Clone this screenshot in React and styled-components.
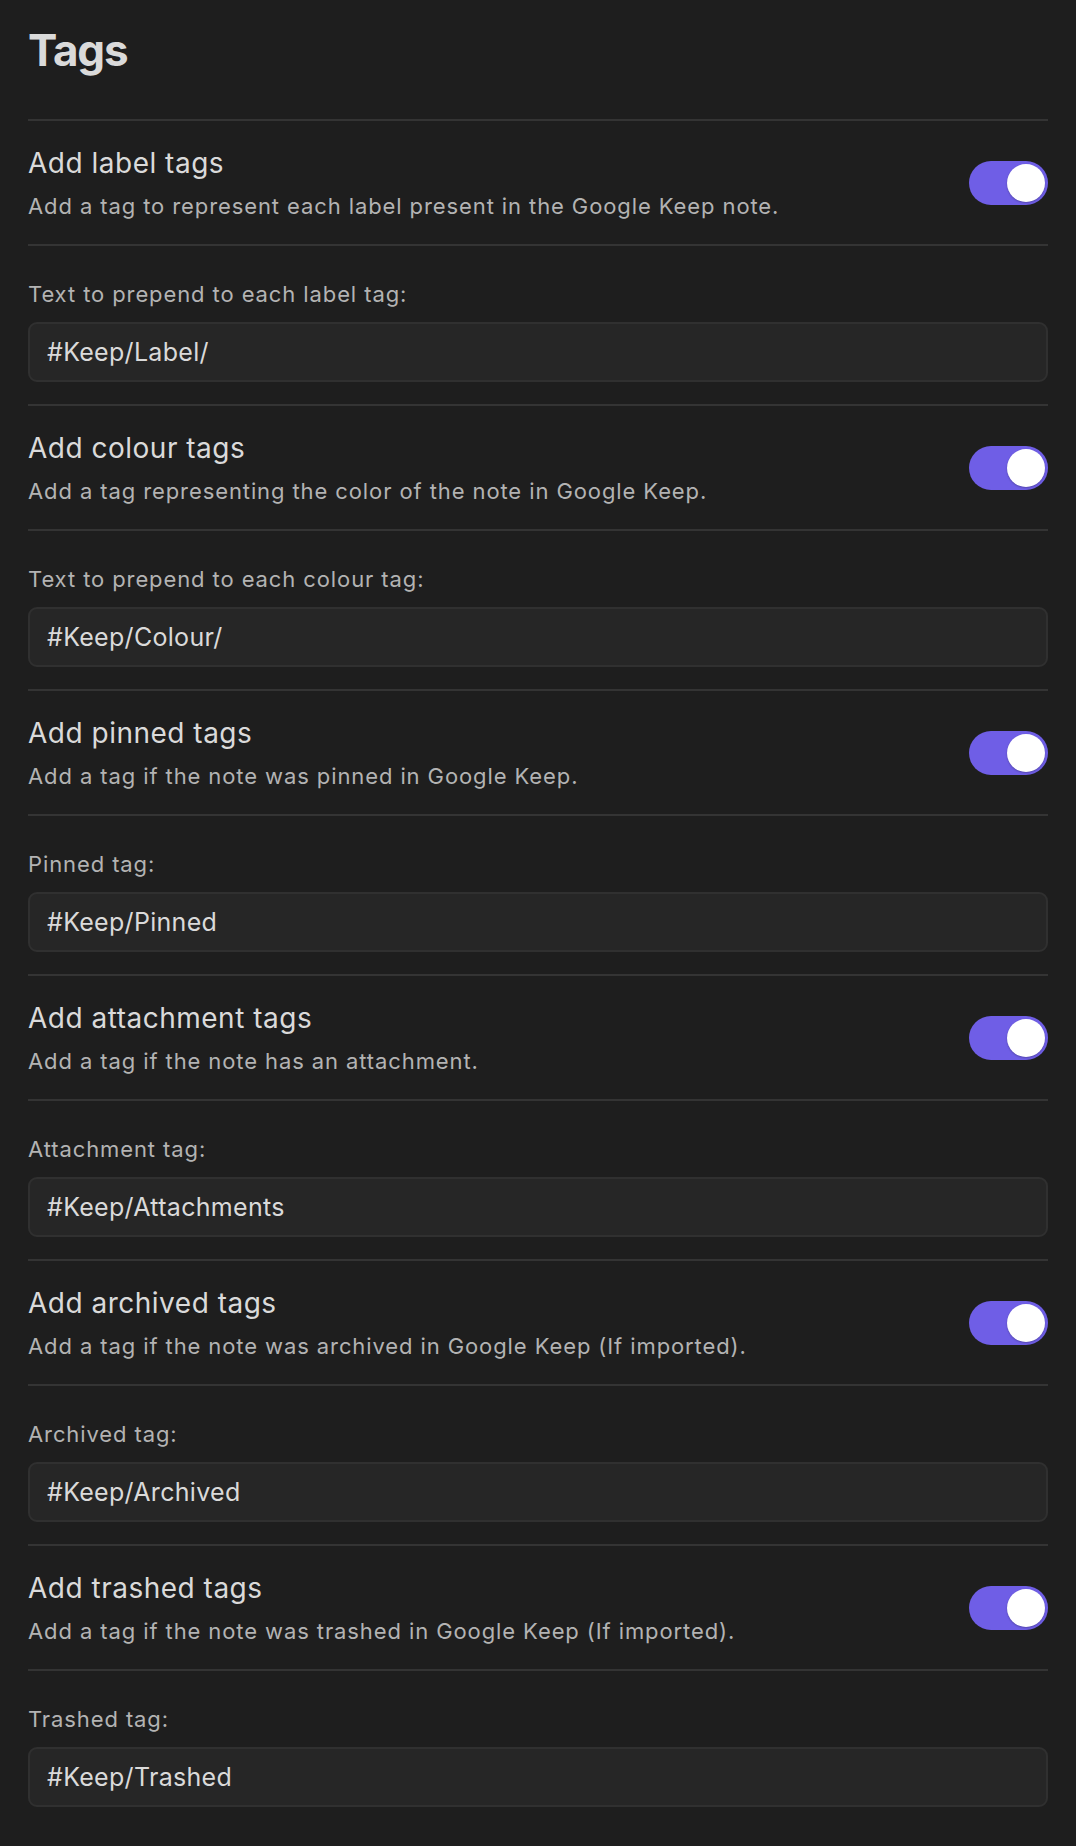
import styled, { createGlobalStyle } from 'styled-components';

const GlobalStyle = createGlobalStyle`
  html, body {
    margin: 0;
    background: #1e1e1e;
  }
  body {
    font-family: Inter, "Noto Sans", sans-serif;
    -webkit-font-smoothing: antialiased;
  }
`;

const Page = styled.div`
  padding: 23px 28px 12px;
  background: #1e1e1e;
  color: #dadada;
`;

const Heading = styled.h2`
  margin: 0 0 41px;
  font-size: 44px;
  font-weight: 700;
  line-height: 55px;
  letter-spacing: -1.2px;
  color: #dadada;
`;

// one row with a name, a description and a switch
const SettingItem = styled.div`
  display: flex;
  align-items: center;
  gap: 24px;
  border-top: 2px solid #343434;
  padding: 24px 0 23px;
`;

const Info = styled.div`
  flex: 1;
  min-width: 0;
`;

const Name = styled.div`
  font-size: 28px;
  line-height: 36px;
  letter-spacing: 0.5px;
  color: #dadada;
`;

const Desc = styled.div`
  margin-top: 10px;
  font-size: 22px;
  line-height: 30px;
  letter-spacing: 0.9px;
  color: #b3b3b3;
`;

// row with a label above a text input
const FieldItem = styled.div`
  display: flex;
  flex-direction: column;
  gap: 13px;
  border-top: 2px solid #343434;
  padding: 33px 0 22px;
`;

const Label = styled.label`
  font-size: 22px;
  line-height: 30px;
  letter-spacing: 0.9px;
  color: #b3b3b3;
`;

const Input = styled.input`
  box-sizing: border-box;
  width: 100%;
  height: 60px;
  padding: 0 17px;
  background: #262626;
  border: 2px solid #303030;
  border-radius: 9px;
  color: #dadada;
  font-family: inherit;
  font-size: 25px;
  letter-spacing: 0.3px;
  outline: none;
`;

const Toggle = styled.button`
  flex: none;
  display: flex;
  align-items: center;
  justify-content: ${(props) => (props.$on ? 'flex-end' : 'flex-start')};
  box-sizing: border-box;
  width: 79px;
  height: 44px;
  padding: 3px;
  border: none;
  border-radius: 22px;
  background: ${(props) => (props.$on ? '#6f5ee6' : '#3f3f3f')};
  cursor: pointer;
`;

const Knob = styled.span`
  width: 38px;
  height: 38px;
  border-radius: 50%;
  background: #ffffff;
  box-shadow: 0 1px 2px rgba(0, 0, 0, 0.25);
`;

const settings = [
  {
    name: 'Add label tags',
    desc: 'Add a tag to represent each label present in the Google Keep note.',
    label: 'Text to prepend to each label tag:',
    value: '#Keep/Label/',
  },
  {
    name: 'Add colour tags',
    desc: 'Add a tag representing the color of the note in Google Keep.',
    label: 'Text to prepend to each colour tag:',
    value: '#Keep/Colour/',
  },
  {
    name: 'Add pinned tags',
    desc: 'Add a tag if the note was pinned in Google Keep.',
    label: 'Pinned tag:',
    value: '#Keep/Pinned',
  },
  {
    name: 'Add attachment tags',
    desc: 'Add a tag if the note has an attachment.',
    label: 'Attachment tag:',
    value: '#Keep/Attachments',
  },
  {
    name: 'Add archived tags',
    desc: 'Add a tag if the note was archived in Google Keep (If imported).',
    label: 'Archived tag:',
    value: '#Keep/Archived',
  },
  {
    name: 'Add trashed tags',
    desc: 'Add a tag if the note was trashed in Google Keep (If imported).',
    label: 'Trashed tag:',
    value: '#Keep/Trashed',
  },
];

const App = () => {
  return (
    <Page>
      <GlobalStyle />
      <Heading>Tags</Heading>
      {settings.map((item) => (
        <div key={item.name}>
          <SettingItem>
            <Info>
              <Name>{item.name}</Name>
              <Desc>{item.desc}</Desc>
            </Info>
            <Toggle $on aria-label={item.name}>
              <Knob />
            </Toggle>
          </SettingItem>
          <FieldItem>
            <Label>{item.label}</Label>
            <Input defaultValue={item.value} />
          </FieldItem>
        </div>
      ))}
    </Page>
  );
};

export default App;
